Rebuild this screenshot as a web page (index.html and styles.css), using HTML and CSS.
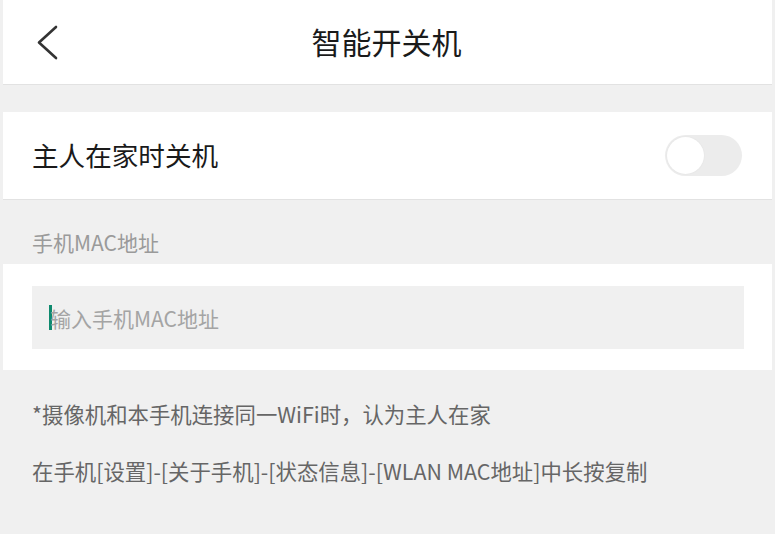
FILE: index.html
```html
<!DOCTYPE html>
<html lang="zh-CN">
<head>
    <meta charset="UTF-8">
    <meta name="viewport" content="width=device-width, initial-scale=1.0">
    <title>智能开关机</title>
    <link rel="stylesheet" href="styles.css">
</head>
<body>
    <div class="page">
        <div class="header">
            <div class="back">
                <svg width="24" height="36" viewBox="0 0 24 36">
                    <polyline points="20,2 3,17.5 20,33" fill="none" stroke="#333" stroke-width="2.6" stroke-linecap="round" stroke-linejoin="round"/>
                </svg>
            </div>
            <div class="title">智能开关机</div>
            <div></div>
        </div>

        <div class="row">
            <span class="row-label">主人在家时关机</span>
            <div class="toggle"><div class="knob"></div></div>
        </div>

        <div class="section-label">手机MAC地址</div>
        <div class="input-wrap">
            <div class="input-box">
                <span class="cursor"></span>
                <span class="placeholder">输入手机MAC地址</span>
            </div>
        </div>

        <div class="notes">
            <p>*摄像机和本手机连接同一WiFi时，认为主人在家</p>
            <p>在手机[设置]-[关于手机]-[状态信息]-[WLAN MAC地址]中长按复制</p>
        </div>
    </div>
</body>
</html>
```

FILE: styles.css
```css
body {
    margin: 0;
    background-color: #f0f0f0;
    font-family: "Noto Sans CJK SC", "Noto Sans", sans-serif;
    color: #222;
}
.page {
    padding: 0 3px;
    min-height: 534px;
}
.header {
    height: 84px;
    background-color: #fff;
    border-bottom: 1px solid #e2e2e2;
    display: grid;
    grid-template-columns: 1fr auto 1fr;
    align-items: center;
}
.back {
    padding-left: 33px;
    padding-top: 2px;
    display: flex;
}
.title {
    font-size: 30px;
    line-height: 40px;
    color: #1a1a1a;
    margin-top: -3px;
    margin-right: 2px;
}
.row {
    margin-top: 27px;
    height: 87px;
    background-color: #fff;
    border-bottom: 1px solid #e2e2e2;
    display: flex;
    align-items: center;
    justify-content: space-between;
    padding: 0 30px 0 29px;
}
.row-label {
    font-size: 26.6px;
    color: #1a1a1a;
    margin-top: -2px;
}
.toggle {
    width: 77px;
    height: 41px;
    border-radius: 21px;
    background-color: #ececec;
    position: relative;
}
.knob {
    position: absolute;
    left: 2px;
    top: 2px;
    width: 37px;
    height: 37px;
    border-radius: 50%;
    background-color: #fff;
    box-shadow: 0 0 2px rgba(0, 0, 0, 0.06);
}
.section-label {
    padding: 30px 29px 10px;
    font-size: 21px;
    line-height: 24px;
    color: #9a9a9a;
}
.input-wrap {
    background-color: #fff;
    padding: 22px 28px 21px 29px;
}
.input-box {
    height: 63px;
    background-color: #f0f0f0;
    display: flex;
    align-items: center;
    padding-left: 17px;
}
.cursor {
    width: 3px;
    height: 25px;
    background-color: #0e8a6e;
    margin-right: -2px;
}
.placeholder {
    font-size: 21px;
    color: #a4a4a4;
}
.notes {
    padding: 29px 29px 0;
}
.notes p {
    margin: 0 0 27px;
    font-size: 21.4px;
    line-height: 30px;
    color: #666;
}
```
